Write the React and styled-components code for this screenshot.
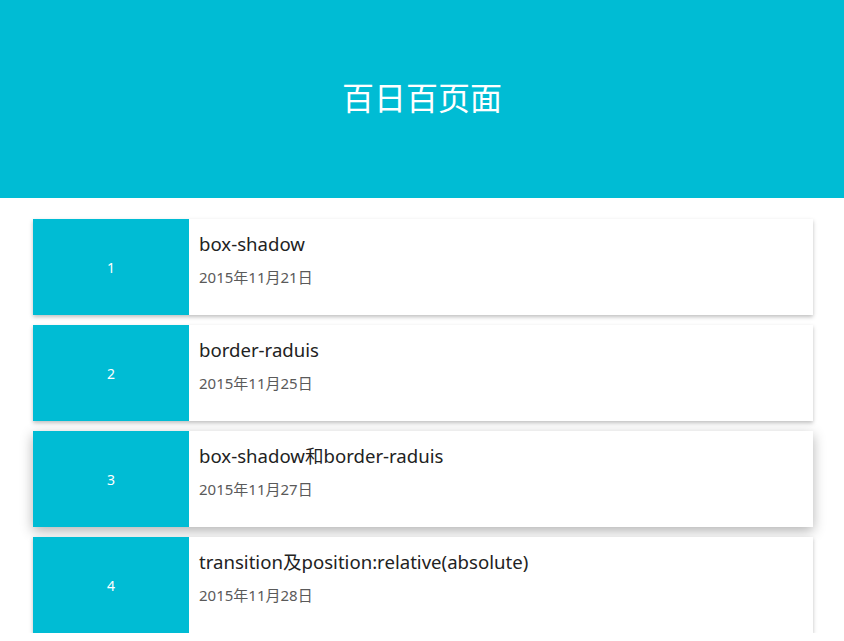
import React from 'react'
import styled, { createGlobalStyle } from 'styled-components'

const GlobalStyle = createGlobalStyle`
  body {
    margin: 0;
    background: #fff;
    font-family: "Noto Sans", "Noto Sans CJK SC", sans-serif;
  }
`

const Header = styled.header`
  height: 198px;
  padding-bottom: 6px;
  box-sizing: border-box;
  background: #00bcd4;
  display: flex;
  align-items: center;
  justify-content: center;
  h1 {
    margin: 0;
    color: #fff;
    font-size: 32px;
    font-weight: normal;
    font-family: "Noto Sans CJK SC", sans-serif;
  }
`

const List = styled.ul`
  list-style: none;
  width: 780px;
  margin: 21px 0 0 33px;
  padding: 0;
  display: flex;
  flex-direction: column;
  gap: 10px;
`

const Card = styled.li`
  display: flex;
  height: 96px;
  background: #fff;
  box-shadow: ${({ $raised }) =>
    $raised ? '0 4px 12px rgba(0,0,0,0.3)' : '0 2px 4px rgba(0,0,0,0.25)'};
`

const Num = styled.div`
  width: 156px;
  flex-shrink: 0;
  background: #00bcd4;
  color: #fff;
  font-size: 14px;
  display: flex;
  align-items: center;
  justify-content: center;
`

const Body = styled.div`
  padding: 13px 10px 0;
  h3 {
    margin: 0;
    font-size: 18.6px;
    font-weight: normal;
    color: #222;
    line-height: 24px;
  }
  p {
    margin: 11px 0 0;
    font-size: 15px;
    color: #5a5a5a;
    line-height: 20px;
  }
`

const items = [
  { title: 'box-shadow', date: '2015年11月21日' },
  { title: 'border-raduis', date: '2015年11月25日' },
  { title: 'box-shadow和border-raduis', date: '2015年11月27日', raised: true },
  { title: 'transition及position:relative(absolute)', date: '2015年11月28日' },
]

export default function App() {
  return (
    <>
      <GlobalStyle />
      <Header><h1>百日百页面</h1></Header>
      <List>
        {items.map((it, i) => (
          <Card key={i} $raised={it.raised}>
            <Num>{i + 1}</Num>
            <Body>
              <h3>{it.title}</h3>
              <p>{it.date}</p>
            </Body>
          </Card>
        ))}
      </List>
    </>
  )
}
